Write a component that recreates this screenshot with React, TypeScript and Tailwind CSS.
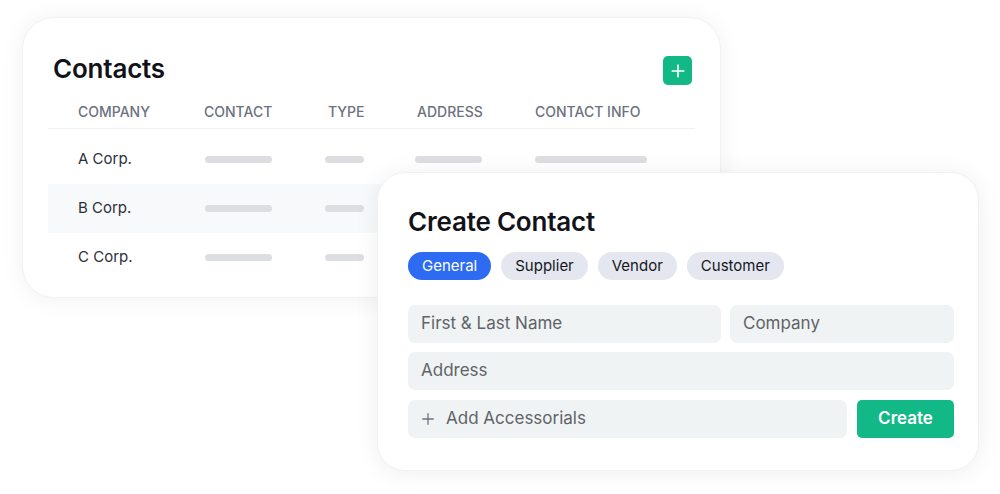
import { Plus } from 'lucide-react';

const font = { fontFamily: 'Inter, "Noto Sans", sans-serif' };

const rows = ['A Corp.', 'B Corp.', 'C Corp.'];

function Bar({ w }: { w: string }) {
  return <div className={`h-[7px] rounded-full bg-[#dcdee1] ${w}`} />;
}

function ContactsCard() {
  return (
    <div className="ml-[22px] mt-[17px] h-[281px] w-[699px] rounded-[32px] border border-[#f1f2f4] bg-white shadow-[0_2px_24px_rgba(0,0,0,0.06)]">
      <div className="flex items-start justify-between pl-[30px] pr-[28px] pt-[36px]">
        <h1 className="text-[26px] font-semibold leading-[30px] tracking-[-0.2px] text-[#111318]">Contacts</h1>
        <button className="mt-[2px] flex h-[29px] w-[29px] items-center justify-center rounded-[5px] bg-[#12b886] text-white">
          <Plus size={20} strokeWidth={2} />
        </button>
      </div>
      <div className="mx-[25px] mt-[11px]">
        <div className="grid h-[33px] grid-cols-[126px_124px_89px_118px_1fr] items-center border-b border-[#f0f1f3] pl-[30px] pb-[2px] text-[14px] font-medium uppercase text-[#6b7280]">
          <span>Company</span>
          <span>Contact</span>
          <span>Type</span>
          <span>Address</span>
          <span>Contact info</span>
        </div>
        <div className="mt-[6px]">
          {rows.map((r, i) => (
            <div
              key={r}
              className={`grid h-[49px] grid-cols-[126px_124px_89px_118px_1fr] items-center pl-[30px] ${i === 1 ? 'bg-[#f8f9fa]' : ''}`}
            >
              <span className="text-[15px] font-normal text-[#2c3038]">{r}</span>
              <div className="pl-[1px]"><Bar w="w-[67px]" /></div>
              <div className="-ml-[3px]"><Bar w="w-[39px]" /></div>
              <div className="-ml-[2px]"><Bar w="w-[67px]" /></div>
              <div><Bar w="w-[112px]" /></div>
            </div>
          ))}
        </div>
      </div>
    </div>
  );
}

const chips = ['General', 'Supplier', 'Vendor', 'Customer'];

function CreateCard() {
  return (
    <div className="relative z-10 ml-[377px] mt-[-126px] h-[299px] w-[602px] rounded-[28px] border border-[#f0f1f3] bg-white pl-[30px] pr-[24px] pt-[33px] shadow-[0_2px_24px_rgba(0,0,0,0.07)]">
      <h2 className="text-[26px] font-semibold leading-[32px] tracking-[-0.2px] text-[#111318]">Create Contact</h2>
      <div className="mt-[14px] flex gap-[10px]">
        {chips.map((c, i) => (
          <span
            key={c}
            className={`flex h-[28px] items-center rounded-full px-[14px] text-[15px] font-normal ${
              i === 0 ? 'bg-[#2d6cf2] text-white' : 'bg-[#e4e7ef] text-[#15171c]'
            }`}
          >
            {c}
          </span>
        ))}
      </div>
      <div className="mt-[25px] flex flex-col gap-[9px] text-[17px] text-[#5f6368]">
        <div className="flex gap-[9px]">
          <div className="flex h-[38px] w-[313px] items-center rounded-[7px] bg-[#f0f3f4] px-[13px]">First &amp; Last Name</div>
          <div className="flex h-[38px] flex-1 items-center rounded-[7px] bg-[#f0f3f4] px-[13px]">Company</div>
        </div>
        <div className="flex h-[38px] items-center rounded-[7px] bg-[#f0f3f4] px-[13px]">Address</div>
        <div className="mt-[1px] flex gap-[10px]">
          <div className="flex h-[38px] flex-1 items-center gap-[9px] rounded-[7px] bg-[#f0f3f4] px-[11px]">
            <Plus size={18} strokeWidth={1.7} className="text-[#6b7280]" />
            <span>Add Accessorials</span>
          </div>
          <button className="flex h-[38px] w-[97px] items-center justify-center rounded-[5px] bg-[#12b886] text-[17px] font-semibold text-white">
            Create
          </button>
        </div>
      </div>
    </div>
  );
}

export default function App() {
  return (
    <div className="h-[494px] w-[1000px] overflow-hidden bg-white" style={font}>
      <div className="flex flex-col">
        <ContactsCard />
        <CreateCard />
      </div>
    </div>
  );
}
